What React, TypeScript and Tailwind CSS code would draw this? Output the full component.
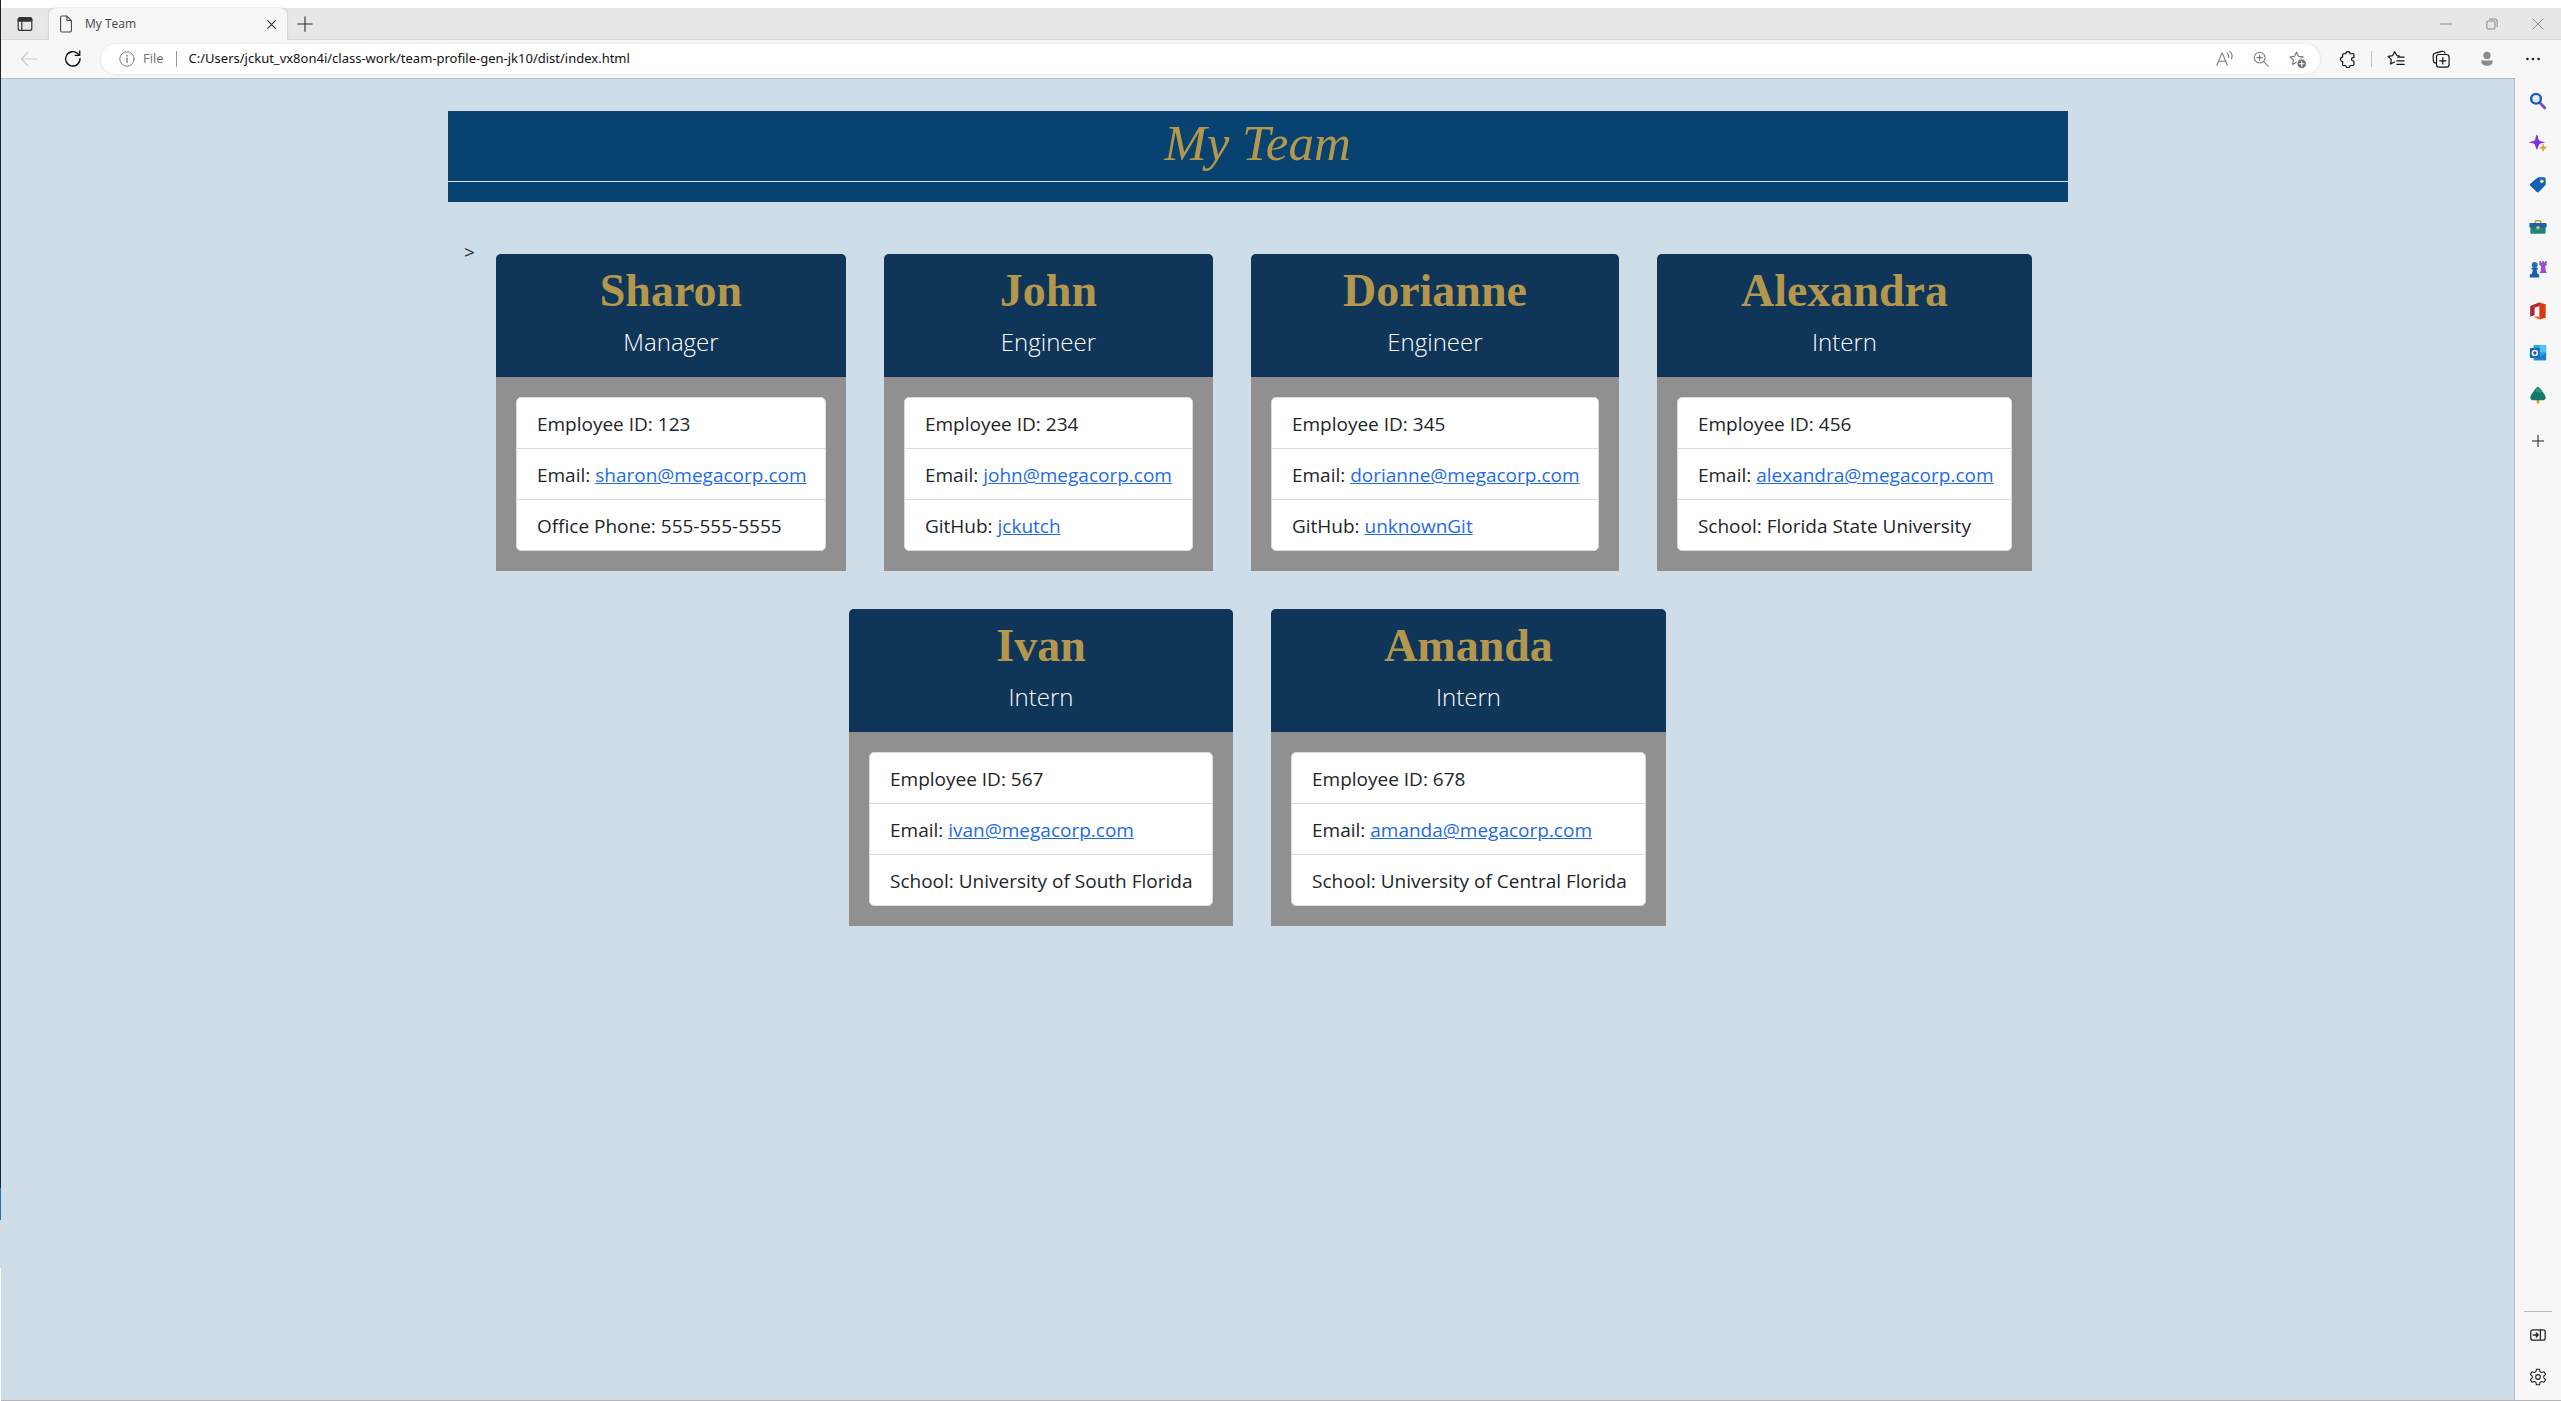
import type { ReactNode } from "react";

type Detail = { label: string; value: string; href?: string };
type Member = { name: string; role: string; width: string; details: Detail[] };

const team: Member[] = [
  {
    name: "Sharon",
    role: "Manager",
    width: "w-[350px]",
    details: [
      { label: "Employee ID", value: "123" },
      { label: "Email", value: "sharon@megacorp.com", href: "mailto:sharon@megacorp.com" },
      { label: "Office Phone", value: "555-555-5555" },
    ],
  },
  {
    name: "John",
    role: "Engineer",
    width: "w-[329px]",
    details: [
      { label: "Employee ID", value: "234" },
      { label: "Email", value: "john@megacorp.com", href: "mailto:john@megacorp.com" },
      { label: "GitHub", value: "jckutch", href: "#jckutch" },
    ],
  },
  {
    name: "Dorianne",
    role: "Engineer",
    width: "w-[368px]",
    details: [
      { label: "Employee ID", value: "345" },
      { label: "Email", value: "dorianne@megacorp.com", href: "mailto:dorianne@megacorp.com" },
      { label: "GitHub", value: "unknownGit", href: "#unknownGit" },
    ],
  },
  {
    name: "Alexandra",
    role: "Intern",
    width: "w-[375px]",
    details: [
      { label: "Employee ID", value: "456" },
      { label: "Email", value: "alexandra@megacorp.com", href: "mailto:alexandra@megacorp.com" },
      { label: "School", value: "Florida State University" },
    ],
  },
  {
    name: "Ivan",
    role: "Intern",
    width: "w-[384px]",
    details: [
      { label: "Employee ID", value: "567" },
      { label: "Email", value: "ivan@megacorp.com", href: "mailto:ivan@megacorp.com" },
      { label: "School", value: "University of South Florida" },
    ],
  },
  {
    name: "Amanda",
    role: "Intern",
    width: "w-[395px]",
    details: [
      { label: "Employee ID", value: "678" },
      { label: "Email", value: "amanda@megacorp.com", href: "mailto:amanda@megacorp.com" },
      { label: "School", value: "University of Central Florida" },
    ],
  },
];

function Icon({ children, className = "size-5" }: { children: ReactNode; className?: string }) {
  return (
    <svg
      viewBox="0 0 20 20"
      className={`${className} shrink-0`}
      fill="none"
      stroke="currentColor"
      strokeWidth="1.2"
      strokeLinecap="round"
      strokeLinejoin="round"
      aria-hidden="true"
    >
      {children}
    </svg>
  );
}

function IconButton({ label, className, children }: { label: string; className: string; children: ReactNode }) {
  return (
    <button type="button" aria-label={label} className={`flex shrink-0 items-center justify-center ${className}`}>
      {children}
    </button>
  );
}

const starPath = "M9 2.2l2 4.4 4.8.6-3.5 3.3.9 4.8L9 13l-4.2 2.3.9-4.8L2.2 7.2 7 6.6z";

function TabStrip() {
  return (
    <div className="flex h-8 items-stretch border-b border-[#d8d8d8] bg-[#e7e7e7]">
      <IconButton label="Tab actions" className="w-12 text-[#333]">
        <Icon className="size-4">
          <rect x="1.5" y="2" width="17" height="16" rx="2.5" strokeWidth="1.5" />
          <path d="M1.5 4.5a2.5 2.5 0 0 1 2.5-2.5h12a2.5 2.5 0 0 1 2.5 2.5V6.5h-17z" fill="currentColor" />
          <path d="M6 6v12" strokeWidth="1.5" />
        </Icon>
      </IconButton>
      <div className="-mb-px flex w-[238px] items-center rounded-t-md bg-[#f7f7f7] shadow-[0_0_2px_rgba(0,0,0,0.25)]">
        <Icon className="ml-2 size-[18px] text-[#444]">
          <path d="M4 2.5a1.3 1.3 0 0 1 1.3-1.3H11l5 5v11.3a1.3 1.3 0 0 1-1.3 1.3H5.3A1.3 1.3 0 0 1 4 17.5zM11 1.2v5h5" />
        </Icon>
        <span className="ml-2.5 flex-1 text-xs text-[#444]">My Team</span>
        <IconButton label="Close tab" className="mr-2 size-4 text-[#333]">
          <Icon className="size-[11px]">
            <path d="M3 3l14 14M17 3L3 17" strokeWidth="2" />
          </Icon>
        </IconButton>
      </div>
      <IconButton label="New tab" className="ml-1 w-7 text-[#333]">
        <Icon className="size-4">
          <path d="M10 1v18M1 10h18" strokeWidth="1.4" />
        </Icon>
      </IconButton>
      <div className="flex-1" />
      <IconButton label="Minimize" className="w-[46px] text-[#888]">
        <Icon className="size-3">
          <path d="M1 10h18" strokeWidth="1.6" />
        </Icon>
      </IconButton>
      <IconButton label="Restore" className="w-[46px] text-[#888]">
        <Icon className="size-3">
          <rect x="1.5" y="5" width="13.5" height="13.5" rx="2.5" strokeWidth="1.7" />
          <path d="M6 1.5h8.5a4 4 0 0 1 4 4V14" strokeWidth="1.7" />
        </Icon>
      </IconButton>
      <IconButton label="Close" className="w-[46px] text-[#888]">
        <Icon className="size-3">
          <path d="M1.5 1.5l17 17M18.5 1.5l-17 17" strokeWidth="1.6" />
        </Icon>
      </IconButton>
    </div>
  );
}

function Toolbar() {
  return (
    <div className="flex h-[38px] items-center bg-[#f7f7f7]">
      <IconButton label="Back" className="ml-1.5 h-8 w-11 text-[#ccc]">
        <Icon className="size-[18px]">
          <path d="M18.5 10h-17M9 2.5L1.5 10 9 17.5" />
        </Icon>
      </IconButton>
      <IconButton label="Refresh" className="h-8 w-11 text-[#111]">
        <Icon className="size-[18px]">
          <path d="M17.8 9.5a8 8 0 1 1-2.6-5.6L17 5.6M17.5 1v5h-5" strokeWidth="1.5" />
        </Icon>
      </IconButton>
      <div className="ml-1.5 flex h-[30px] flex-1 items-center rounded-full bg-white pl-[18px] shadow-[0_0_3px_rgba(0,0,0,0.12)]">
        <Icon className="size-4 text-[#777]">
          <circle cx="10" cy="10" r="9" />
          <path d="M10 9v5.500" strokeWidth="1.6" />
          <path d="M10 5.9v.2" strokeWidth="2" />
        </Icon>
        <span className="ml-2 text-[13px] text-[#707070]">File</span>
        <span className="ml-3 h-4 w-px bg-[#999]" />
        <input
          type="text"
          aria-label="Address"
          defaultValue="C:/Users/jckut_vx8on4i/class-work/team-profile-gen-jk10/dist/index.html"
          className="ml-3 min-w-0 flex-1 bg-transparent font-['Noto_Sans',sans-serif] text-[13px] text-[#111] outline-none"
        />
        <IconButton label="Read aloud" className="h-[30px] w-9 text-[#777]">
          <Icon className="size-[18px]">
            <path d="M1 17L6.500 3.500h.6L12.500 17M3 12.500h7.600M12.500 3.500c1.400 1.200 1.800 2.900 1.300 4.600M15.300 1.500c2.700 2.200 3.200 5.400 1.900 8.200" />
          </Icon>
        </IconButton>
        <IconButton label="Zoom" className="h-[30px] w-9 text-[#777]">
          <Icon className="size-[18px]">
            <circle cx="8.5" cy="8.5" r="6" />
            <path d="M13 13l5 5M8.5 5.5v6M5.5 8.5h6" />
          </Icon>
        </IconButton>
        <IconButton label="Add to favorites" className="mr-[5px] h-[30px] w-9 text-[#777]">
          <Icon className="size-[19px]">
            <path d={starPath} />
            <circle cx="14.5" cy="14.5" r="5" fill="#6b6b6b" stroke="#fff" strokeWidth="1" />
            <path d="M14.5 12v5M12 14.5h5" stroke="#fff" strokeWidth="1.2" />
          </Icon>
        </IconButton>
      </div>
      <IconButton label="Extensions" className="ml-1.5 h-8 w-11 text-[#111]">
        <Icon className="size-[18px]">
          <path
            d="M7.500 4.200a2.400 2.400 0 0 1 4.800 0h3.300a1 1 0 0 1 1 1v3.200h-.8a1.900 1.900 0 0 0 0 3.800h.8v4a1 1 0 0 1-1 1h-3.300a2.400 2.400 0 0 1-4.800 0H5a1 1 0 0 1-1-1v-3.500a2.400 2.400 0 0 1 0-4.800V5.200a1 1 0 0 1 1-1z"
            strokeWidth="1.3"
          />
        </Icon>
      </IconButton>
      <span className="mx-px h-4 w-px bg-[#c4c4c4]" />
      <IconButton label="Favorites" className="h-8 w-[46px] text-[#111]">
        <Icon className="size-[18px]">
          <path
            d="M13.500 6.500l-2.600-.4L8.500 1.800 6.200 6.300l-4.900.8 3.500 3.500-.8 5 4.500-2.300M12 8h7M11 12h8M11 16h8"
            strokeWidth="1.3"
          />
        </Icon>
      </IconButton>
      <IconButton label="Collections" className="h-8 w-11 text-[#111]">
        <Icon className="size-[18px]">
          <path
            d="M4 14.500A3 3 0 0 1 1.500 11.500l-.3-5A3 3 0 0 1 3.500 3.500l7.500-2a3 3 0 0 1 3.500 2M5 14V7.500A2.500 2.500 0 0 1 7.500 5H16a3 3 0 0 1 3 3v8a3 3 0 0 1-3 3H8a3 3 0 0 1-3-3zM12 8.500v7M8.500 12h7"
            strokeWidth="1.3"
          />
        </Icon>
      </IconButton>
      <IconButton label="Profile" className="h-8 w-12 text-[#8a8a8a]">
        <Icon className="size-4">
          <circle cx="10" cy="5.5" r="4.5" fill="currentColor" stroke="none" />
          <path d="M3 12h14v1.500c0 3.500-3.500 5-7 5s-7-1.500-7-5z" fill="currentColor" stroke="none" />
        </Icon>
      </IconButton>
      <IconButton label="Settings and more" className="mr-1.5 h-8 w-11 text-[#222]">
        <Icon className="size-4">
          <g fill="currentColor" stroke="none">
            <circle cx="3" cy="10" r="1.7" />
            <circle cx="10" cy="10" r="1.7" />
            <circle cx="17" cy="10" r="1.7" />
          </g>
        </Icon>
      </IconButton>
    </div>
  );
}

const sidebarApps: { label: string; art: ReactNode }[] = [
  {
    label: "Search",
    art: (
      <g>
        <path d="M12 12l5.500 5.500" stroke="#8245c9" strokeWidth="3.2" />
        <circle cx="7.8" cy="7.5" r="5.5" stroke="#1c5bb5" strokeWidth="2.6" fill="#dcecfa" />
      </g>
    ),
  },
  {
    label: "Discover",
    art: (
      <g stroke="none">
        <path d="M8.800.500c1 1 1.500 6 3 7 1 .9 5.700 1 5.700 1.800s-4.700.9-5.700 1.800c-1.500 1-2 6.200-3 6.200s-1.500-5.200-3-6.200C4.800 10.200.200 10.100.200 9.300s4.600-.9 5.600-1.800c1.500-1 2-7 3-7z" fill="#7a35e0" />
        <path d="M15.800 11.500c.6 2.600 1.200 3.200 3.700 3.900-2.500.7-3.100 1.300-3.700 3.900-.6-2.600-1.200-3.200-3.700-3.900 2.500-.7 3.100-1.300 3.700-3.900z" fill="#dba528" stroke="#dba528" strokeWidth=".8" />
      </g>
    ),
  },
  {
    label: "Shopping",
    art: (
      <g stroke="none">
        <path d="M10.500 1.500h6.300a1.700 1.700 0 0 1 1.700 1.700v6a2 2 0 0 1-.6 1.400l-6.800 7a1.700 1.700 0 0 1-2.400 0l-7-7a1.700 1.700 0 0 1 0-2.400L9 2.100a2 2 0 0 1 1.500-.6z" fill="#1560b8" />
        <path d="M1.200 9.200l8.900 8.900a1.700 1.700 0 0 1-1.400-.5l-7-7a1.700 1.700 0 0 1-.5-1.400z" fill="#0b3f8c" />
        <circle cx="14.3" cy="5.8" r="2" fill="#ffdf8a" />
      </g>
    ),
  },
  {
    label: "Tools",
    art: (
      <g stroke="none">
        <path d="M7 5.500V4a1 1 0 0 1 1-1h4a1 1 0 0 1 1 1v1.500" stroke="#c4952c" strokeWidth="1.6" fill="none" />
        <rect x="1.5" y="10" width="17" height="7.5" rx="1" fill="#1b8778" />
        <path d="M1.500 5.500h17a1 1 0 0 1 1 1v4h-19v-4a1 1 0 0 1 1-1z" fill="#1d61aa" />
        <circle cx="10" cy="10.8" r="2" fill="#f2bd3e" />
      </g>
    ),
  },
  {
    label: "Games",
    art: (
      <g stroke="none">
        <path d="M11.500 1h1.800v1.500h1.500V1h1.700v1.500H18V1h1.700v4.500L18 7l.6 5 1.200 2.500h-8l1.200-2.500.5-5-2-1.500z" fill="#9a4ddb" />
        <circle cx="6.3" cy="5.5" r="3.3" fill="#1f6fc4" />
        <path d="M2.800 8.700h7v1.800H8.300l1 4.500 2 1.500v3H.800v-3l2.500-1.500 1-4.500H2.800z" fill="#1a5cb0" />
      </g>
    ),
  },
  {
    label: "Office",
    art: (
      <g stroke="none">
        <path d="M11.500.500l7 2v15l-7 2V4.500L6 6v8.500L1.500 16V4.500z" fill="#d83b12" />
        <path d="M1.500 16V4.500L11.500.500v4L6 6v8.500z" fill="#b3243f" />
        <path d="M4.500 16h7v3.500z" fill="#e8642c" />
      </g>
    ),
  },
  {
    label: "Outlook",
    art: (
      <g stroke="none">
        <rect x="5" y="1" width="14" height="17" rx="1" fill="#2ba4e8" />
        <rect x="12" y="1" width="7" height="8" fill="#50c6f5" />
        <path d="M5 18L19 10v7a1 1 0 0 1-1 1z" fill="#1a7fcf" />
        <rect x="1" y="4.5" width="11" height="11" rx="1" fill="#0f67bd" />
        <circle cx="6.5" cy="10" r="2.8" stroke="#fff" strokeWidth="1.7" fill="none" />
      </g>
    ),
  },
  {
    label: "Drop",
    art: (
      <g stroke="none">
        <rect x="8.5" y="14" width="3" height="5.5" rx=".8" fill="#d99a2b" />
        <path d="M10 .8c1.200 0 4.500 4 5 5.700 1 1 3.500 4.500 3.500 6.500 0 1.800-1.200 2.800-3 2.800h-11c-1.800 0-3-1-3-2.800 0-2 2.500-5.500 3.500-6.500C5.500 4.800 8.800.8 10 .8z" fill="#14796a" />
        <path d="M10 .8c1.200 0 4.500 4 5 5.700-2 2.500-7 1.500-8-2C8 2.500 9.500.8 10 .8z" fill="#2a9a72" />
      </g>
    ),
  },
];

function Sidebar() {
  return (
    <nav
      aria-label="Sidebar"
      className="flex w-[47px] shrink-0 flex-col items-center border-l border-[#b5bec6] bg-[#f7f7f7] pt-0.5 text-[#222]"
    >
      {sidebarApps.map((app) => (
        <IconButton key={app.label} label={app.label} className="h-[42px] w-full">
          <Icon className="size-[18px]">{app.art}</Icon>
        </IconButton>
      ))}
      <IconButton label="Customize sidebar" className="mt-1 h-[42px] w-full">
        <Icon className="size-3">
          <path d="M10 0v20M0 10h20" strokeWidth="1.7" />
        </Icon>
      </IconButton>
      <div className="flex-1" />
      <span className="mb-0.5 h-px w-7 bg-[#b8b8b8]" />
      <IconButton label="Hide sidebar" className="h-[42px] w-full">
        <Icon className="size-4">
          <path
            d="M3.500 3.500h13a2.500 2.500 0 0 1 2.500 2.500v8a2.500 2.500 0 0 1-2.500 2.500h-13A2.500 2.500 0 0 1 1 14V6a2.500 2.500 0 0 1 2.500-2.500zM13 3.500v13M4 10h6M7.800 7.500L10.300 10l-2.500 2.500"
            strokeWidth="1.6"
          />
        </Icon>
      </IconButton>
      <IconButton label="Settings" className="mb-0.5 h-[42px] w-full">
        <Icon className="size-[18px]">
          <circle cx="10" cy="10" r="2.6" />
          <path d="M8.300 1.300h3.400l.6 2.700 1.700 1 2.700-.9 1.700 3-2 1.900v2l2 1.900-1.700 3-2.700-.9-1.700 1-.6 2.700H8.300L7.700 16l-1.700-1-2.700.9-1.700-3 2-1.900V9l-2-1.900 1.700-3L6 5l1.700-1z" />
        </Icon>
      </IconButton>
    </nav>
  );
}

function MemberCard({ member }: { member: Member }) {
  return (
    <article className={`m-[19px] overflow-hidden rounded-t-[5px] bg-[#909090] ${member.width}`}>
      <header className="border-b border-[#14304c] bg-[#0f3558] pt-2.5 pb-[19px] text-center">
        <h2 className="mb-[9px] font-['Liberation_Serif',serif] text-[46px] leading-[54px] font-bold text-[#b4974c]">
          {member.name}
        </h2>
        <p className="text-2xl leading-[30px] font-light text-white">{member.role}</p>
      </header>
      <div className="p-5">
        <ul className="divide-y divide-[#dcdcdc] rounded-[5px] border border-[#dcdcdc] bg-white">
          {member.details.map((d) => (
            <li
              key={d.label}
              className="px-5 pt-[11px] pb-[9px] text-[19px] leading-[30px] whitespace-nowrap text-[#212529]"
            >
              {d.label}:{" "}
              {d.href ? (
                <a href={d.href} className="text-[#1f6be6] underline">
                  {d.value}
                </a>
              ) : (
                d.value
              )}
            </li>
          ))}
        </ul>
      </div>
    </article>
  );
}

export default function App() {
  return (
    <div className="flex min-h-screen bg-white font-['Open_Sans','Noto_Sans',sans-serif]">
      <div className="flex w-px shrink-0 flex-col" aria-hidden="true">
        <span className="h-[1188px] bg-[#20242a]" />
        <span className="h-8 bg-[#1f74b0]" />
        <span className="h-12 bg-[#d5d8e4]" />
      </div>
      <div className="flex min-w-0 flex-1 flex-col pt-2">
        <TabStrip />
        <Toolbar />
        <div className="flex flex-1 border-b border-[#b5b5b8]">
          <main className="flex-1 border-t border-[#b5bfc6] bg-[#cfdde8] pt-8">
            <div className="mx-auto max-w-[1620px] bg-[#074270] pb-5 text-center">
              <h1 className="border-b border-[#dde6ee] pt-0.5 pb-2 font-['Liberation_Serif',serif] text-[51px] leading-[60px] text-[#b4974c] italic">
                My Team
              </h1>
            </div>
            <div className="mx-auto mt-[33px] flex max-w-[1620px] flex-wrap items-start justify-center">
              <span className="pt-0.5 pr-0.5 text-[19px] leading-[30px] text-[#212529]">&gt;</span>
              {team.map((m) => (
                <MemberCard key={m.name} member={m} />
              ))}
            </div>
          </main>
          <Sidebar />
        </div>
      </div>
    </div>
  );
}
